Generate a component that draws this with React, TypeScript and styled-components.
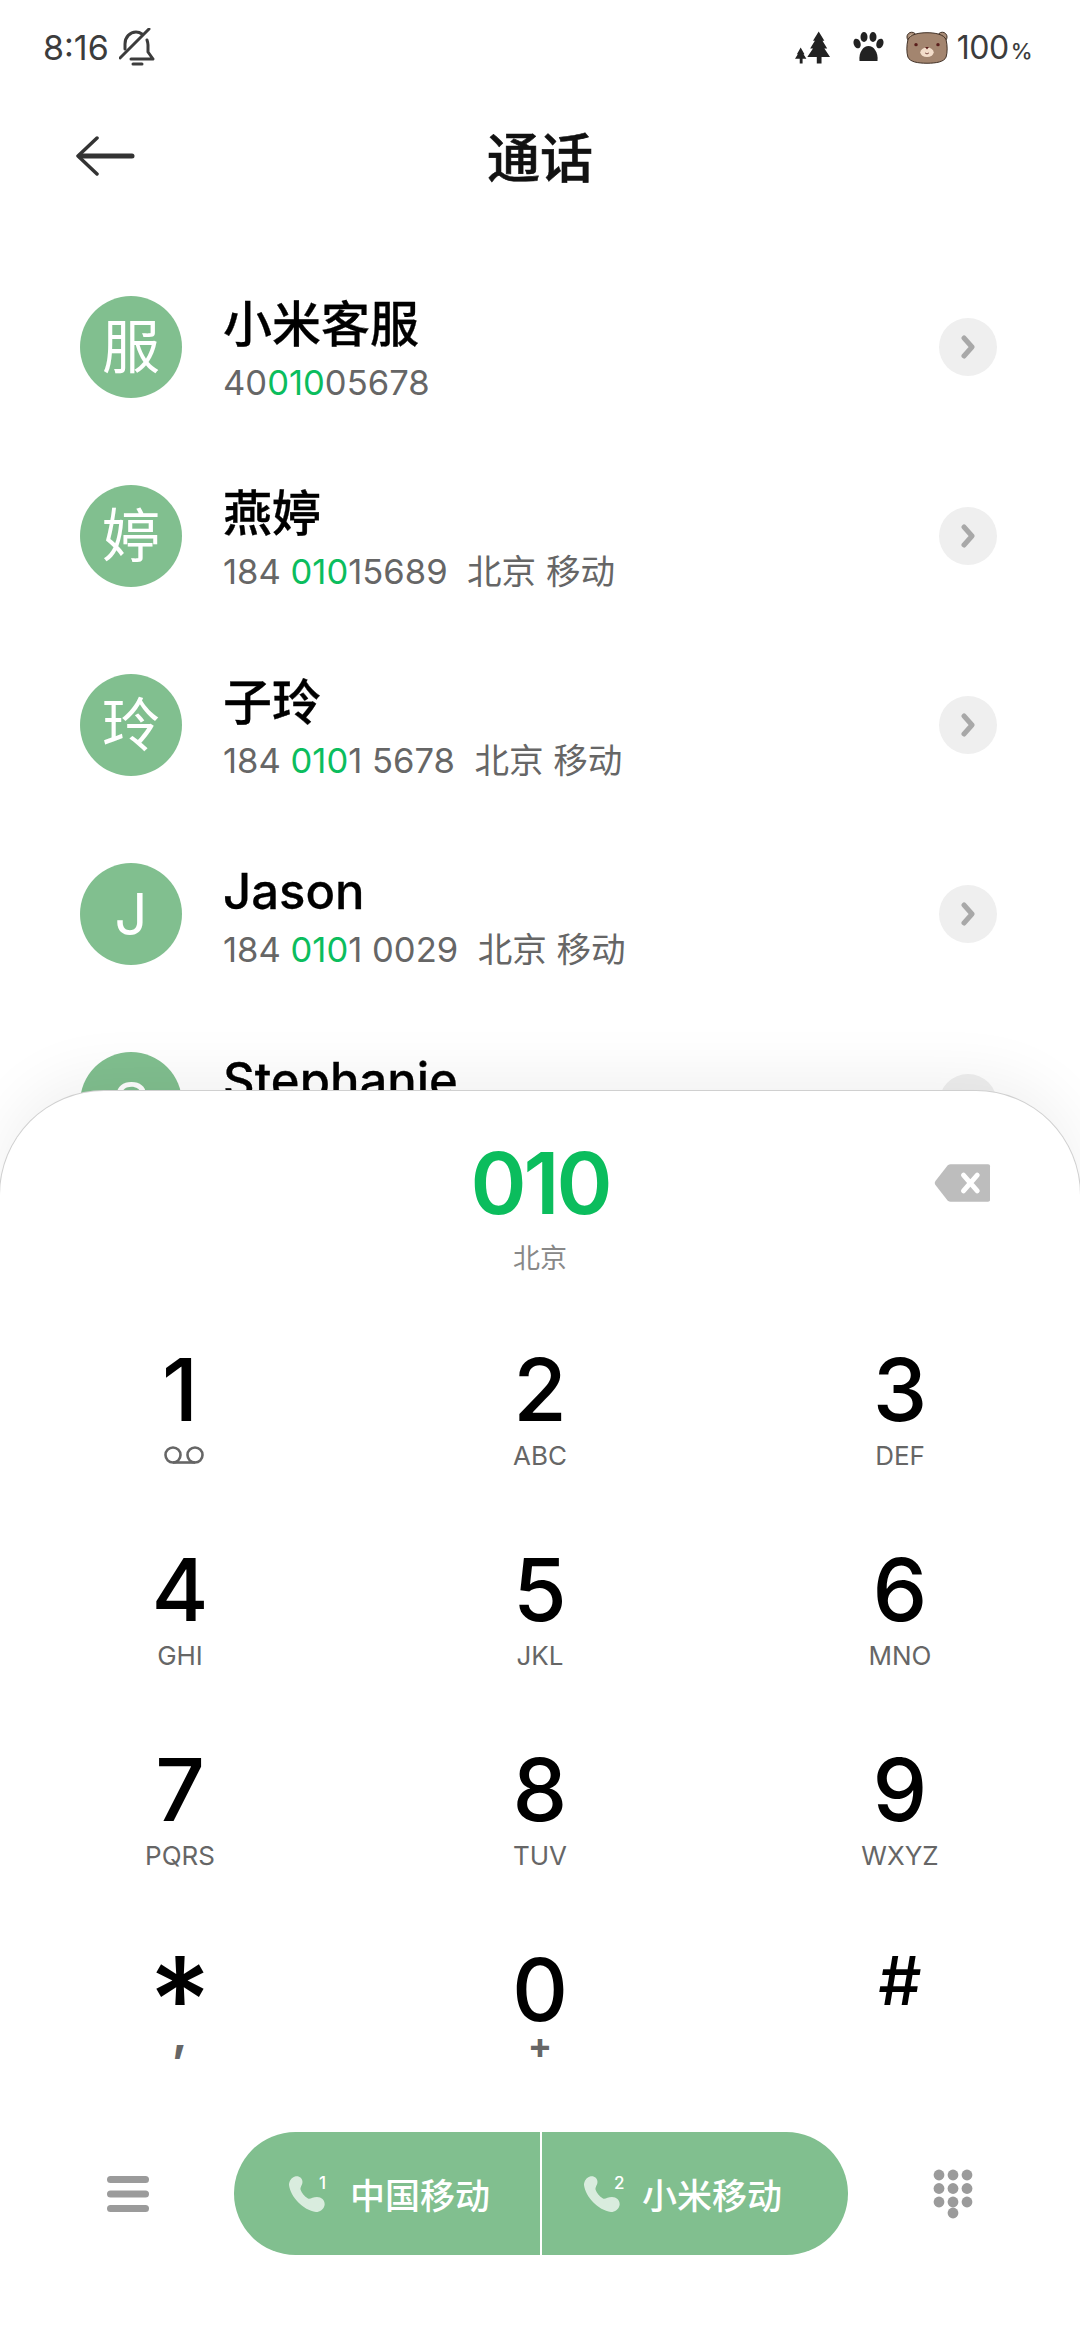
import React from 'react';
import styled, { createGlobalStyle } from 'styled-components';

const FONT = `Inter, "Noto Sans CJK SC", "Noto Sans", sans-serif`;

const GlobalStyle = createGlobalStyle`
  html, body {
    margin: 0;
    padding: 0;
    background: #fff;
  }
  body {
    font-family: ${FONT};
  }
`;

const Page = styled.div`
  position: relative;
  width: 1080px;
  height: 2340px;
  overflow: hidden;
  background: #fff;
`;

const StatusBar = styled.div`
  height: 94px;
  display: flex;
  align-items: center;
  justify-content: space-between;
  padding: 0 48px 0 43px;
  color: #3c3c3c;
  font-size: 34px;
`;

const StatusGroup = styled.div<{ $gap: number }>`
  display: flex;
  align-items: center;
  gap: ${({ $gap }) => $gap}px;
`;

const Battery = styled.span`
  font-size: 32px;
  letter-spacing: -0.5px;
`;

const Percent = styled.span`
  font-size: 22px;
  font-weight: 500;
  margin-left: 2px;
`;

const Header = styled.header`
  height: 126px;
  box-sizing: border-box;
  padding-bottom: 5px;
  position: relative;
  display: flex;
  align-items: center;
  justify-content: center;
`;

const BackButton = styled.div`
  position: absolute;
  left: 75px;
  top: 42px;
  display: flex;
`;

const Title = styled.h1`
  margin: 0;
  font-size: 53px;
  font-weight: 500;
  -webkit-text-stroke: 0.6px #111;
  color: #111;
`;

const ContactList = styled.div`
  padding-top: 32px;
`;

const Row = styled.div`
  height: 189px;
  display: flex;
  align-items: center;
  padding: 0 83px 0 80px;
`;

const Avatar = styled.div<{ $lift: number }>`
  width: 102px;
  height: 102px;
  box-sizing: border-box;
  padding-bottom: ${({ $lift }) => $lift}px;
  border-radius: 50%;
  flex: none;
  display: flex;
  align-items: center;
  justify-content: center;
  background: #81bf8f;
  color: #fff;
  font-size: 58px;
`;

const RowText = styled.div`
  flex: 1;
  height: 102px;
  margin-left: 41px;
`;

const Name = styled.div`
  font-size: 49px;
  line-height: 58px;
  font-weight: 500;
  -webkit-text-stroke: 0.3px #000;
  color: #000;
`;

const Sub = styled.div`
  margin-top: 5px;
  font-size: 34.6px;
  line-height: 46px;
  color: #666;
  white-space: pre;
`;

const Match = styled.span`
  color: #0bbd5d;
`;

const Chevron = styled.div`
  width: 58px;
  height: 58px;
  border-radius: 50%;
  flex: none;
  display: flex;
  align-items: center;
  justify-content: center;
  background: #efefef;
`;

const Sheet = styled.section`
  position: absolute;
  left: 0;
  right: 0;
  top: 1091px;
  bottom: 0;
  background: #fff;
  border-radius: 104px 104px 0 0;
  box-shadow: 0 0 0 1px #d0d0d0, 0 -16px 60px rgba(0, 0, 0, 0.06);
`;

const Display = styled.div`
  height: 249px;
  box-sizing: border-box;
  padding-top: 43px;
`;

const NumberRow = styled.div`
  display: grid;
  grid-template-columns: 1fr auto 1fr;
  align-items: center;
`;

const Dialed = styled.div`
  font-size: 85px;
  line-height: 100px;
  font-weight: 600;
  letter-spacing: -3px;
  color: #0bbd5d;
`;

const DeleteCell = styled.div`
  display: flex;
  justify-content: flex-end;
  padding: 0 89px 3px 0;
`;

const Place = styled.div`
  margin-top: 5px;
  text-align: center;
  font-size: 27px;
  line-height: 40px;
  color: #888;
`;

const Keypad = styled.div`
  display: grid;
  grid-template-columns: repeat(3, 1fr);
  grid-template-rows: repeat(3, 200px) 192px;
`;

const Key = styled.div`
  display: flex;
  flex-direction: column;
  align-items: center;
`;

const Digit = styled.div<{ $size?: number; $top?: number }>`
  font-size: ${({ $size }) => $size ?? 87}px;
  line-height: 100px;
  height: 100px;
  font-weight: 450;
  color: #000;
  transform: translateY(${({ $top }) => $top ?? 0}px);
`;

const KeyLabel = styled.div`
  height: 30px;
  display: flex;
  align-items: center;
  font-size: 26px;
  color: #666;
`;

const VoicemailSlot = styled(KeyLabel)`
  margin-left: 8px;
`;

const Symbol = styled.div<{ $lift: number; $size: number }>`
  font-size: ${({ $size }) => $size}px;
  font-weight: 700;
  line-height: 30px;
  color: #666;
  margin-top: -${({ $lift }) => $lift}px;
`;

const CallBar = styled.div`
  display: flex;
  align-items: center;
  justify-content: space-between;
  padding: 0 107px;
`;

const CallPill = styled.div`
  width: 614px;
  height: 123px;
  display: flex;
  border-radius: 62px;
  overflow: hidden;
  background: #81bf8f;
`;

const SimButton = styled.div<{ $pad: number }>`
  flex: 0 0 50%;
  box-sizing: border-box;
  display: flex;
  align-items: center;
  padding-left: ${({ $pad }) => $pad}px;
  color: #fff;
  font-size: 35px;
  font-weight: 500;
  & + & {
    margin-left: -1px;
    border-left: 2px solid #fff;
  }
`;

const SimIcon = styled.div<{ $gap: number }>`
  position: relative;
  width: 36px;
  height: 36px;
  margin-right: ${({ $gap }) => $gap}px;
  display: flex;
`;

const SimNumber = styled.span`
  position: absolute;
  left: 30px;
  top: -3px;
  font-size: 17px;
  line-height: 20px;
  font-weight: 500;
  color: #fff;
`;

const BellOffIcon = () => (
  <svg width="36" height="38" viewBox="0 0 36 38" fill="none" stroke="#3c3c3c" strokeWidth="3" strokeLinecap="round" strokeLinejoin="round">
    <path d="M6 21 V16 C6 9 11 4 17 4 C19 4 21 4.5 23 6" />
    <path d="M28 12 C28.5 13.5 29 15 29 17 V24 L34 31 H12" />
    <path d="M14 36 H23" />
    <path d="M1 30 L30 1" />
  </svg>
);

const TreesIcon = () => (
  <svg width="36" height="33" viewBox="0 0 38 34" fill="#222">
    <path d="M25 0 L31 10 H29 L34 18 H31 L37 27 H28 V34 H23 V27 H13 L19 18 H16 L21 10 H19 Z" />
    <path d="M6 17 L10 24 H9 L12 29 H8 V34 H5 V29 H0 L3 24 H2 Z" />
  </svg>
);

const PawIcon = () => (
  <svg width="31" height="30" viewBox="0 0 30 30" fill="#222">
    <ellipse cx="3.6" cy="11.5" rx="3.4" ry="5" transform="rotate(-20 3.6 11.5)" />
    <ellipse cx="10.5" cy="5" rx="3.5" ry="5" />
    <ellipse cx="19.5" cy="5" rx="3.5" ry="5" />
    <ellipse cx="26.4" cy="11.5" rx="3.4" ry="5" transform="rotate(20 26.4 11.5)" />
    <path d="M6 29 C5 20 10 14 15 14 C20 14 25 20 24 29 Z" />
  </svg>
);

const BearIcon = () => (
  <svg width="42" height="33" viewBox="0 0 44 34">
    <circle cx="6" cy="6" r="5" fill="#a98d78" stroke="#3a2a20" strokeWidth="1" />
    <circle cx="38" cy="6" r="5" fill="#a98d78" stroke="#3a2a20" strokeWidth="1" />
    <circle cx="6" cy="6" r="2.6" fill="#d9bfa8" />
    <path d="M22 1.5 C30 1.5 40 3 42 9 C43.5 15 43.5 22 42 27 C40 32 32 33.5 22 33.5 C12 33.5 4 32 2 27 C0.5 22 0.5 15 2 9 C4 3 14 1.5 22 1.5 Z" fill="#a3856f" stroke="#3a2a20" strokeWidth="1" />
    <circle cx="10.5" cy="14" r="1.8" fill="#5a1f1c" />
    <circle cx="33.5" cy="14" r="1.8" fill="#5a1f1c" />
    <ellipse cx="22" cy="22" rx="7" ry="5" fill="#f3ddca" />
    <path d="M20 16.5 H24 L22 19 Z" fill="#5a1f1c" />
    <path d="M20 22.5 C21 24 23 24 24 22.5" fill="none" stroke="#5a1f1c" strokeWidth="0.8" />
  </svg>
);

const BackArrow = () => (
  <svg width="60" height="40" viewBox="0 0 60 40" fill="none" stroke="#333" strokeWidth="5" strokeLinecap="round" strokeLinejoin="round">
    <path d="M57 20 H5" />
    <path d="M22 2 L3 20 L22 38" strokeWidth="3.5" />
  </svg>
);

const ChevronIcon = () => (
  <svg width="16" height="24" viewBox="0 0 16 24" fill="none" stroke="#a8a8a8" strokeWidth="5" strokeLinecap="round" strokeLinejoin="round">
    <path d="M4 3 L12 12 L4 21" />
  </svg>
);

const DeleteIcon = () => (
  <svg width="57" height="40" viewBox="0 0 58 40">
    <path d="M17 1 H55 C56.5 1 57 2 57 3 V37 C57 38.5 56 39 55 39 H17 C16 39 15 38.5 14 38 L1.5 22 C0.5 20.5 0.5 19.5 1.5 18 L14 2 C15 1.5 16 1 17 1 Z" fill="#bdbdbd" />
    <path d="M30 12 L44 28 M44 12 L30 28" stroke="#fff" strokeWidth="5" strokeLinecap="round" />
  </svg>
);

const VoicemailIcon = () => (
  <svg width="40" height="18" viewBox="0 0 40 18" fill="none" stroke="#666" strokeWidth="2.6">
    <circle cx="9" cy="9" r="7.5" />
    <circle cx="31" cy="9" r="7.5" />
    <path d="M9 16.5 H31" />
  </svg>
);

const PhoneGlyph = () => (
  <svg width="36" height="36" viewBox="0 0 36 36" fill="rgba(255,255,255,0.7)">
    <path d="M6 0.5 C10 -0.5 13.5 2 13.5 6 C13.5 9 11 11 11.5 13.5 C12.5 17 15.5 20.5 19 22.5 C21 23.5 24 21 28 21 C33 21 36.5 25 35.5 29.5 C34.5 33.5 31 36 27 36 C14 34 1.5 21 0 9 C0 5 2.5 1.5 6 0.5 Z" />
  </svg>
);

const MenuIcon = () => (
  <svg width="42" height="36" viewBox="0 0 42 36" fill="#9b9b9b">
    <rect x="0" y="0" width="42" height="7" rx="3.5" />
    <rect x="0" y="14.5" width="42" height="7" rx="3.5" />
    <rect x="0" y="29" width="42" height="7" rx="3.5" />
  </svg>
);

const DialpadIcon = () => {
  const cols = [6, 20, 34];
  const rows = [6, 19.5, 33];
  return (
    <svg width="40" height="50" viewBox="0 0 40 50" fill="#9b9b9b">
      {rows.map((y) => cols.map((x) => <circle key={`${x}-${y}`} cx={x} cy={y} r="5.4" />))}
      <circle cx="20" cy="44" r="5.4" />
    </svg>
  );
};

type Contact = {
  avatar: string;
  lift: number;
  name: string;
  before?: string;
  match?: string;
  after?: string;
};

const contacts: Contact[] = [
  { avatar: '服', lift: 8, name: '小米客服', before: '40', match: '010', after: '05678' },
  { avatar: '婷', lift: 8, name: '燕婷', before: '184 ', match: '010', after: '15689  北京 移动' },
  { avatar: '玲', lift: 8, name: '子玲', before: '184 ', match: '010', after: '1 5678  北京 移动' },
  { avatar: 'J', lift: 0, name: 'Jason', before: '184 ', match: '010', after: '1 0029  北京 移动' },
  { avatar: 'S', lift: 0, name: 'Stephanie' },
];

type DialKey = {
  digit: string;
  label?: string;
  symbol?: string;
  symbolLift?: number;
  symbolSize?: number;
  size?: number;
  top?: number;
  voicemail?: boolean;
};

const keys: DialKey[] = [
  { digit: '1', voicemail: true },
  { digit: '2', label: 'ABC' },
  { digit: '3', label: 'DEF' },
  { digit: '4', label: 'GHI' },
  { digit: '5', label: 'JKL' },
  { digit: '6', label: 'MNO' },
  { digit: '7', label: 'PQRS' },
  { digit: '8', label: 'TUV' },
  { digit: '9', label: 'WXYZ' },
  { digit: '*', symbol: ',', symbolLift: 22, symbolSize: 46, size: 120, top: 10 },
  { digit: '0', symbol: '+', symbolLift: 10 },
  { digit: '#', size: 68, top: -10 },
];

const App: React.FC = () => (
  <Page>
    <GlobalStyle />
    <StatusBar>
      <StatusGroup $gap={10}>
        <span>8:16</span>
        <BellOffIcon />
      </StatusGroup>
      <StatusGroup $gap={22}>
        <TreesIcon />
        <PawIcon />
        <StatusGroup $gap={9}>
          <BearIcon />
          <Battery>
            100<Percent>%</Percent>
          </Battery>
        </StatusGroup>
      </StatusGroup>
    </StatusBar>

    <Header>
      <BackButton>
        <BackArrow />
      </BackButton>
      <Title>通话</Title>
    </Header>

    <ContactList>
      {contacts.map((c) => (
        <Row key={c.name}>
          <Avatar $lift={c.lift}>{c.avatar}</Avatar>
          <RowText>
            <Name>{c.name}</Name>
            <Sub>
              {c.before}
              <Match>{c.match}</Match>
              {c.after}
            </Sub>
          </RowText>
          <Chevron>
            <ChevronIcon />
          </Chevron>
        </Row>
      ))}
    </ContactList>

    <Sheet>
      <Display>
        <NumberRow>
          <span />
          <Dialed>010</Dialed>
          <DeleteCell>
            <DeleteIcon />
          </DeleteCell>
        </NumberRow>
        <Place>北京</Place>
      </Display>

      <Keypad>
        {keys.map((k) => (
          <Key key={k.digit}>
            <Digit $size={k.size} $top={k.top}>
              {k.digit}
            </Digit>
            {k.label && <KeyLabel>{k.label}</KeyLabel>}
            {k.voicemail && (
              <VoicemailSlot>
                <VoicemailIcon />
              </VoicemailSlot>
            )}
            {k.symbol && (
              <Symbol $lift={k.symbolLift ?? 0} $size={k.symbolSize ?? 36}>
                {k.symbol}
              </Symbol>
            )}
          </Key>
        ))}
      </Keypad>

      <CallBar>
        <MenuIcon />
        <CallPill>
          <SimButton $pad={55}>
            <SimIcon $gap={25}>
              <PhoneGlyph />
              <SimNumber>1</SimNumber>
            </SimIcon>
            中国移动
          </SimButton>
          <SimButton $pad={42}>
            <SimIcon $gap={22}>
              <PhoneGlyph />
              <SimNumber>2</SimNumber>
            </SimIcon>
            小米移动
          </SimButton>
        </CallPill>
        <DialpadIcon />
      </CallBar>
    </Sheet>
  </Page>
);

export default App;
